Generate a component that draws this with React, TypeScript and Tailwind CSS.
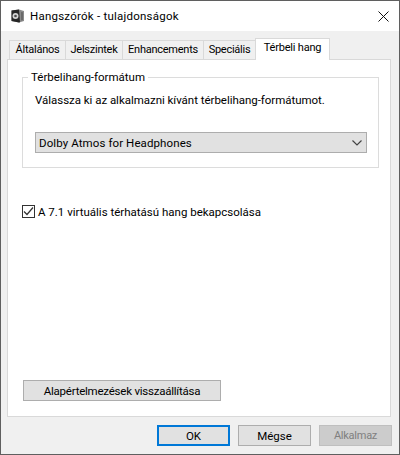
const font = "font-['Roboto','Liberation_Sans',sans-serif]";

function SpeakerIcon() {
  return (
    <svg width="14" height="14" viewBox="0 0 14 14">
      <path d="M0.5 1.5 L8 0.5 L13 2 L13 12 L8 13.5 L0.5 12 Z" fill="#8a8a8a" />
      <path d="M0.5 1.5 L8 0.5 L9 13.3 L8 13.5 L0.5 12 Z" fill="#262626" />
      <circle cx="4.5" cy="7" r="3" fill="#d4d4d4" />
      <circle cx="4.5" cy="7" r="1.3" fill="#4a4a4a" />
      <path d="M10 3 L12 3.3 L12 11 L10 11.5 Z" fill="#6a6a6a" />
    </svg>
  );
}

function Tab({ label, active, width }: { label: string; active?: boolean; width: string }) {
  if (active) {
    return (
      <div className={`${width} h-[22px] -mb-px bg-white border border-b-0 border-[#d9d9d9] flex items-center justify-center relative z-10 pb-[3px] text-[11px] tracking-[-0.2px]`}>
        {label}
      </div>
    );
  }
  return (
    <div className={`${width} h-[19px] border border-b-0 border-r-0 border-[#d9d9d9] flex items-center justify-center text-[11px] tracking-[-0.25px]`}>
      {label}
    </div>
  );
}

function DialogButton({ label, disabled, primary }: { label: string; disabled?: boolean; primary?: boolean }) {
  let cls = "border border-[#adadad] bg-[#e1e1e1] text-black";
  if (primary) cls = "border-2 border-[#0078d7] bg-[#e1e1e1] text-black";
  if (disabled) cls = "border border-[#bfbfbf] bg-[#cccccc] text-[#7f7f7f] text-[11px] tracking-[-0.25px]";
  return <div className={`w-[73px] h-[21px] flex items-center justify-center ${cls}`}>{label}</div>;
}

export default function App() {
  return (
    <div className={`w-[400px] h-[455px] bg-[#f0f0f0] border border-[#5f5f5f] flex flex-col text-[11.5px] leading-[16px] text-black ${font}`}>
      {/* cim sor */}
      <div className="h-[30px] bg-white flex items-center pl-[10px] pr-[10px] shrink-0">
        <SpeakerIcon />
        <span className="ml-[5px] tracking-[0.23px]">Hangszórók - tulajdonságok</span>
        <svg className="ml-auto" width="11" height="11" viewBox="0 0 11 11">
          <path d="M0.5 0.5 L10.5 10.5 M10.5 0.5 L0.5 10.5" stroke="#111" strokeWidth="1" fill="none" />
        </svg>
      </div>

      {/* fulek */}
      <div className="flex items-end pl-[8px] h-[28px] shrink-0">
        <Tab label="Általános" width="w-[56px]" />
        <Tab label="Jelszintek" width="w-[57px]" />
        <Tab label="Enhancements" width="w-[81px]" />
        <Tab label="Speciális" width="w-[52px]" />
        <Tab label="Térbeli hang" width="w-[75px]" active />
      </div>

      {/* panel */}
      <div className="ml-[6px] mr-[8px] h-[358px] bg-white border border-[#d9d9d9] flex flex-col pl-[14px] shrink-0">
        <fieldset className="border border-[#dcdcdc] mt-[9px] h-[99px] w-[357px] pl-[12px] pr-[11px]">
          <legend className="ml-[-7px] px-[3px]">Térbelihang-formátum</legend>
          <p className="mt-[7px] tracking-[-0.03px]">Válassza ki az alkalmazni kívánt térbelihang-formátumot.</p>
          <div className="mt-[24px] h-[21px] bg-[#e1e1e1] border border-[#adadad] flex items-center pl-[3px] pr-[4px] justify-between">
            <span className="tracking-[0.1px]">Dolby Atmos for Headphones</span>
            <svg width="10" height="6" viewBox="0 0 10 6">
              <path d="M0.5 0.5 L5 5 L9.5 0.5" stroke="#444" strokeWidth="1.2" fill="none" />
            </svg>
          </div>
        </fieldset>

        <div className="flex items-center mt-[37px] h-[13px]">
          <div className="w-[13px] h-[13px] bg-white border border-[#333] flex items-center justify-center shrink-0">
            <svg width="11" height="11" viewBox="0 0 11 11">
              <path d="M1 5.5 L4 8.5 L10 1.5" stroke="#333" strokeWidth="1.2" fill="none" />
            </svg>
          </div>
          <span className="ml-[3px]">A 7.1 virtuális térhatású hang bekapcsolása</span>
        </div>

        <div className="mt-[162px] ml-[1px] w-[198px] h-[21px] bg-[#e1e1e1] border border-[#adadad] flex items-center justify-center tracking-[-0.23px]">
          Alapértelmezések visszaállítása
        </div>
      </div>

      {/* also gombok */}
      <div className="flex justify-end gap-[8px] pr-[7px] mt-[8px]">
        <DialogButton label="OK" primary />
        <DialogButton label="Mégse" />
        <DialogButton label="Alkalmaz" disabled />
      </div>
    </div>
  );
}
